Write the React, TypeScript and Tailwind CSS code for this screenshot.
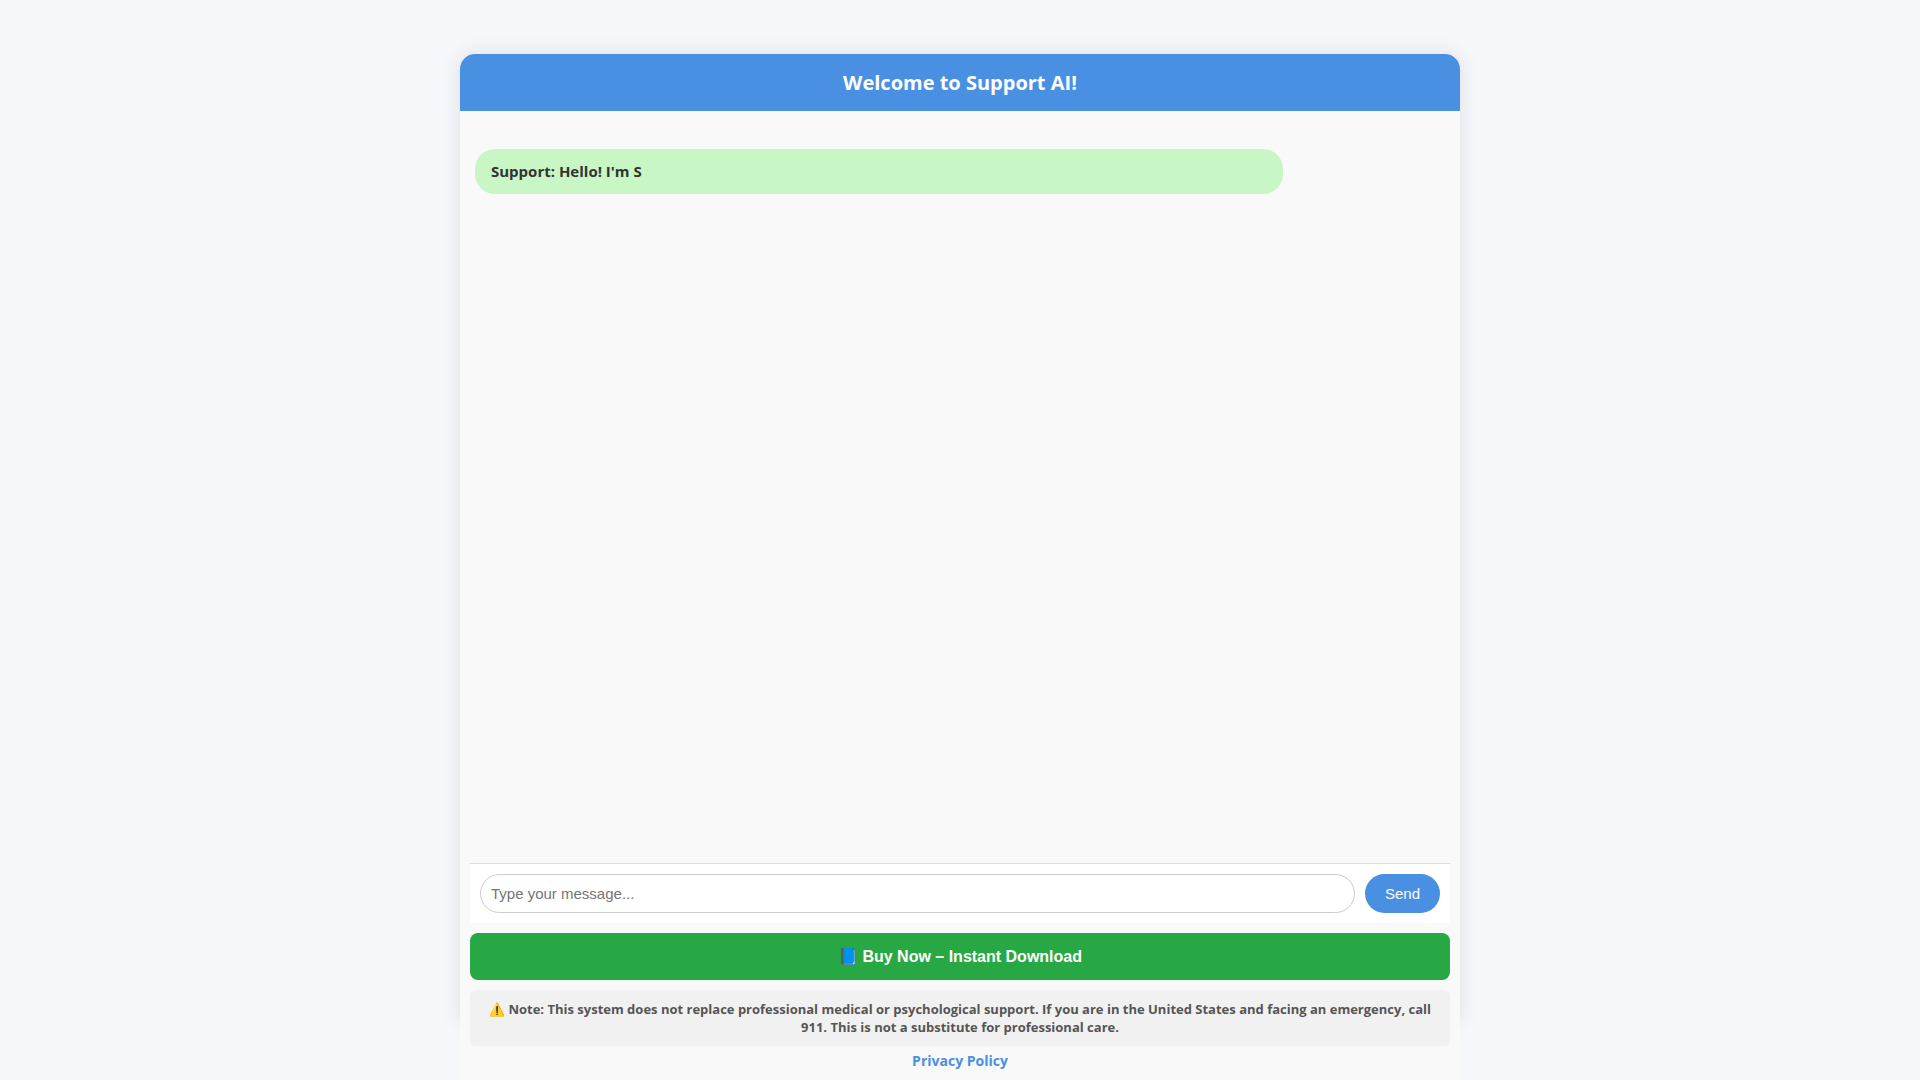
const sans = 'font-["Open_Sans",sans-serif]';
const arial = 'font-["Liberation_Sans",Arial,sans-serif]';

export default function App() {
  return (
    <div className={`h-screen overflow-hidden bg-[#f5f7fa] pt-[54px] ${sans}`}>
      <div className="mx-auto h-[972px] w-[1000px] rounded-[15px] shadow-[0_0_20px_rgba(0,0,0,0.1)]">
        <div className="flex h-[1026px] flex-col rounded-t-[15px] bg-[#f9f9f9]">
          <header className="flex h-[57px] shrink-0 items-center justify-center rounded-t-[15px] bg-[#4a90e2] text-[20px] font-bold text-white">
            Welcome to Support AI!
          </header>

          <div className="flex h-[752px] shrink-0 flex-col px-[15px] pt-[38px]">
            <div className="flex h-[45px] w-[808px] items-center rounded-[20px] bg-[#c8f7c5] px-4 text-[15px] font-bold text-[#333]">
              Support: Hello! I'm S
            </div>
          </div>

          <div className="mx-[10px] flex h-[60px] shrink-0 items-center gap-[10px] border-t border-[#ddd] bg-white px-[10px]">
            <input
              placeholder="Type your message..."
              className={`h-[39px] flex-1 rounded-[20px] border border-[#ccc] px-[10px] text-[15px] outline-none placeholder:text-[#757575] ${arial}`}
            />
            <button className={`h-[39px] w-[75px] rounded-[20px] bg-[#4a90e2] pt-px text-[15px] text-white ${arial}`}>
              Send
            </button>
          </div>

          <a className={`mx-[10px] mt-[10px] flex h-[47px] shrink-0 items-center justify-center rounded-lg bg-[#28a745] text-[16px] font-bold text-white ${arial}`}>
            📘 Buy Now – Instant Download
          </a>

          <div className="mx-[10px] mt-[10px] shrink-0 rounded-md bg-[#f1f1f1] px-[10px] py-[10px] text-center text-[13px] leading-[18px] font-bold text-[#555]">
            ⚠️ Note: This system does not replace professional medical or psychological support. If you are in the United States and facing an emergency, call 911. This is not a substitute for professional care.
          </div>

          <div className="pt-[4px] text-center text-[14px] font-bold text-[#4a90e2]">
            Privacy Policy
          </div>
        </div>
      </div>
    </div>
  );
}
